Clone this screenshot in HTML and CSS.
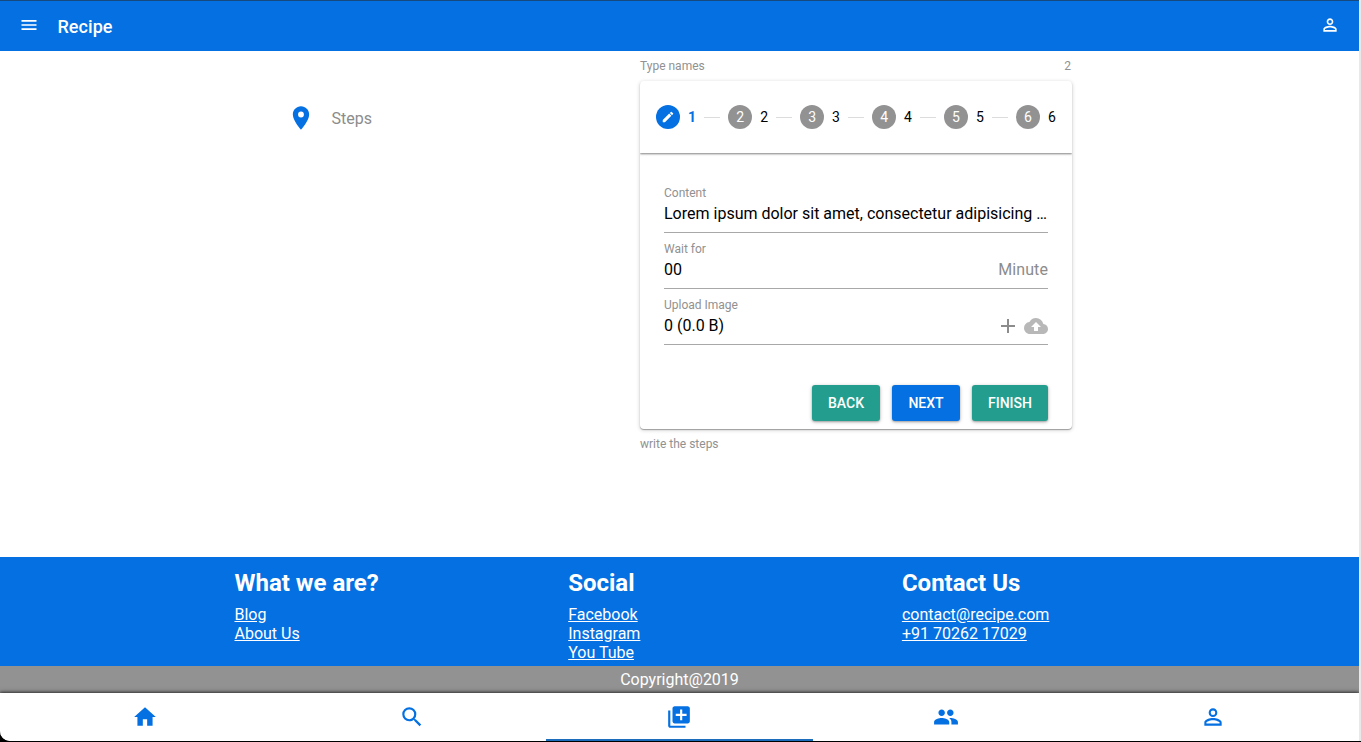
FILE: index.html
```html
<!DOCTYPE html>
<html lang="en">
<head>
<meta charset="utf-8">
<title>Recipe</title>
<link rel="stylesheet" href="styles.css">
</head>
<body>
<div class="app">
  <header class="header">
    <svg class="icon icon-header" viewBox="0 0 24 24"><path d="M3 18h18v-2H3v2zm0-5h18v-2H3v2zm0-7v2h18V6H3z"/></svg>
    <h1 class="title">Recipe</h1>
    <svg class="icon icon-header" viewBox="0 0 24 24"><path d="M12 5.9a2.1 2.1 0 110 4.2 2.1 2.1 0 010-4.2m0 9c2.97 0 6.1 1.46 6.1 2.1v1.1H5.9V17c0-.64 3.13-2.1 6.1-2.1M12 4C9.79 4 8 5.79 8 8s1.79 4 4 4 4-1.79 4-4-1.79-4-4-4zm0 9c-2.67 0-8 1.34-8 4v3h16v-3c0-2.66-5.33-4-8-4z"/></svg>
  </header>

  <main class="main">
    <div class="item">
      <svg class="icon icon-place" viewBox="0 0 24 24"><path d="M12 2C8.13 2 5 5.13 5 9c0 5.25 7 13 7 13s7-7.75 7-13c0-3.87-3.13-7-7-7zm0 9.500a2.500 2.500 0 010-5 2.500 2.500 0 010 5z"/></svg>
      <span class="item-label">Steps</span>
    </div>
    <section class="panel">
      <div class="panel-top"><span>Type names</span><span>2</span></div>
      <div class="card">
        <div class="stepper">
          <div class="step step-active"><span class="dot"><svg class="icon icon-edit" viewBox="0 0 24 24"><path d="M3 17.250V21h3.750L17.810 9.940l-3.750-3.750L3 17.250zM20.710 7.040a1 1 0 000-1.410l-2.340-2.340a1 1 0 00-1.410 0l-1.830 1.830 3.750 3.750 1.830-1.830z"/></svg></span><span>1</span></div>
          <i class="line"></i>
          <div class="step"><span class="dot">2</span><span>2</span></div>
          <i class="line"></i>
          <div class="step"><span class="dot">3</span><span>3</span></div>
          <i class="line"></i>
          <div class="step"><span class="dot">4</span><span>4</span></div>
          <i class="line"></i>
          <div class="step"><span class="dot">5</span><span>5</span></div>
          <i class="line"></i>
          <div class="step"><span class="dot">6</span><span>6</span></div>
        </div>
        <div class="form">
          <div class="field">
            <label class="field-label">Content</label>
            <div class="field-row"><span class="value">Lorem ipsum dolor sit amet, consectetur adipisicing …</span></div>
          </div>
          <div class="field">
            <label class="field-label">Wait for</label>
            <div class="field-row"><span class="value">00</span><span class="suffix">Minute</span></div>
          </div>
          <div class="field">
            <label class="field-label">Upload Image</label>
            <div class="field-row"><span class="value">0 (0.0 B)</span>
              <span class="actions">
                <svg class="icon icon-add" viewBox="0 0 24 24"><path d="M19 13h-6v6h-2v-6H5v-2h6V5h2v6h6v2z"/></svg>
                <svg class="icon icon-cloud" viewBox="0 0 24 24"><path d="M19.350 10.040A7.490 7.490 0 0012 4C9.110 4 6.600 5.640 5.350 8.040A5.994 5.994 0 000 14c0 3.310 2.690 6 6 6h13c2.760 0 5-2.240 5-5 0-2.640-2.050-4.780-4.650-4.960zM14 13v4h-4v-4H7l5-5 5 5h-3z"/></svg>
              </span>
            </div>
          </div>
        </div>
        <div class="buttons">
          <button class="btn">BACK</button>
          <button class="btn btn-primary">NEXT</button>
          <button class="btn">FINISH</button>
        </div>
      </div>
      <div class="hint">write the steps</div>
    </section>
  </main>

  <footer class="footer">
    <div class="col"><h2>What we are?</h2><a href="#">Blog</a><a href="#">About Us</a></div>
    <div class="col"><h2>Social</h2><a href="#">Facebook</a><a href="#">Instagram</a><a href="#">You Tube</a></div>
    <div class="col"><h2>Contact Us</h2><a href="#">contact@recipe.com</a><a href="#">+91 70262 17029</a></div>
  </footer>
  <div class="copyright">Copyright@2019</div>

  <nav class="tabs">
    <a class="tab"><svg class="icon icon-tab" viewBox="0 0 24 24"><path d="M10 20v-6h4v6h5v-8h3L12 3 2 12h3v8z"/></svg></a>
    <a class="tab"><svg class="icon icon-tab" viewBox="0 0 24 24"><path d="M15.500 14h-.790l-.280-.270A6.471 6.471 0 0016 9.500 6.500 6.500 0 109.500 16c1.610 0 3.090-.590 4.230-1.570l.270.280v.790l5 4.990L20.490 19l-4.990-5zm-6 0a4.500 4.500 0 110-9 4.500 4.500 0 010 9z"/></svg></a>
    <a class="tab tab-active"><svg class="icon icon-tab" viewBox="0 0 24 24"><path d="M4 6H2v14c0 1.100.900 2 2 2h14v-2H4V6zm16-4H8c-1.100 0-2 .900-2 2v12c0 1.100.900 2 2 2h12c1.100 0 2-.900 2-2V4c0-1.100-.900-2-2-2zm-1 9h-4v4h-2v-4H9V9h4V5h2v4h4v2z"/></svg></a>
    <a class="tab"><svg class="icon icon-tab" viewBox="0 0 24 24"><path d="M16 11c1.660 0 2.990-1.340 2.990-3S17.660 5 16 5s-3 1.340-3 3 1.340 3 3 3zm-8 0c1.660 0 2.990-1.340 2.990-3S9.660 5 8 5 5 6.340 5 8s1.340 3 3 3zm0 2c-2.330 0-7 1.170-7 3.500V19h14v-2.500c0-2.330-4.670-3.500-7-3.500zm8 0c-.290 0-.620.020-.970.050 1.160.840 1.970 1.970 1.970 3.450V19h6v-2.500c0-2.330-4.670-3.500-7-3.500z"/></svg></a>
    <a class="tab"><svg class="icon icon-tab" viewBox="0 0 24 24"><path d="M12 5.900a2.100 2.100 0 110 4.200 2.100 2.100 0 010-4.200m0 9c2.970 0 6.100 1.460 6.100 2.100v1.100H5.900V17c0-.640 3.130-2.100 6.100-2.100M12 4C9.790 4 8 5.790 8 8s1.790 4 4 4 4-1.790 4-4-1.790-4-4-4zm0 9c-2.670 0-8 1.340-8 4v3h16v-3c0-2.660-5.330-4-8-4z"/></svg></a>
  </nav>
</div>
</body>
</html>
```

FILE: styles.css
```css
* { box-sizing: border-box; }
html { background: #000; }
body {
  margin: 0;
  height: 742px;
  overflow: hidden;
  font-family: Roboto, "Liberation Sans", sans-serif;
  font-size: 16px;
  color: #000;
}
.app {
  height: 741px;
  display: flex;
  flex-direction: column;
  background: #fff;
  border-right: 2px solid #e9e9e9;
  border-bottom-left-radius: 10px;
  overflow: hidden;
}
.icon { display: block; flex: none; width: 24px; height: 24px; fill: currentColor; }

.header {
  flex: none;
  height: 51px;
  display: flex;
  align-items: center;
  padding: 0 19px 0 18.600px;
  border-top: 1px solid #17487e;
  background: #0470e1;
  color: #fff;
}
.icon-header { width: 20px; height: 20px; margin-top: -2px; }
.title {
  flex: 1;
  margin: 2px 0 0 18.900px;
  font-size: 18px;
  line-height: 24px;
  font-weight: 500;
  letter-spacing: 0.05px;
}

.main {
  flex: 1;
  display: flex;
  padding: 8px 287px 0;
}
.item { width: 353px; display: flex; align-items: center; height: 118px; color: #8c8c8c; }
.icon-place { width: 28px; height: 28px; color: #0470e1; }
.item-label { margin-left: 16.500px; padding-top: 1px; }

.panel { width: 432px; }
.panel-top {
  display: flex;
  justify-content: space-between;
  height: 22px;
  padding-right: 1px;
}
.panel-top, .hint, .field-label {
  font-size: 12px;
  line-height: 14px;
  color: #919191;
}
.hint { padding-top: 8px; }
.card {
  height: 348px;
  border-radius: 4px;
  box-shadow: 0 1px 4px rgba(0,0,0,.2), 0 1px 1px rgba(0,0,0,.3);
}
.stepper {
  height: 72px;
  display: flex;
  align-items: center;
  justify-content: space-between;
  padding: 0 16px;
  font-size: 14px;
  box-shadow: 0 1px 2px rgba(0,0,0,.5);
  clip-path: inset(0 0 -4px 0);
}
.step { display: flex; align-items: center; gap: 8px; }
.step-active { color: #0470e1; font-weight: 700; }
.dot {
  width: 24px;
  height: 24px;
  border-radius: 50%;
  display: flex;
  align-items: center;
  justify-content: center;
  background: #929292;
  color: #fff;
}
.step-active .dot { background: #0470e1; }
.icon-edit { width: 14px; height: 14px; }
.line { width: 16px; height: 1px; background: #dcdcdc; }

.form { padding: 24px 24px 0; }
.field { height: 56px; padding-top: 9px; border-bottom: 1px solid #a8a8a8; }
.field-label { display: block; height: 14px; }
.field-row {
  display: flex;
  align-items: center;
  justify-content: space-between;
  height: 24px;
  margin-top: 1px;
  white-space: nowrap;
}
.suffix { color: #8c8c8c; letter-spacing: 0.1px; }
.actions { display: flex; gap: 4px; padding-top: 2px; color: #8c8c8c; }
.icon-cloud { color: #b8b8b8; }

.buttons {
  display: flex;
  justify-content: flex-end;
  gap: 12px;
  padding: 40px 24px 0;
}
.btn {
  min-width: 68px;
  height: 36px;
  padding: 0 15.500px;
  border: 0;
  border-radius: 3px;
  background: #239e8e;
  color: #fff;
  font: 500 14px/24px Roboto, "Liberation Sans", sans-serif;
  box-shadow: 0 1px 4px rgba(0,0,0,.2), 0 1px 2px rgba(0,0,0,.25);
}
.btn:last-child { min-width: 76px; }
.btn-primary { background: #0470e1; }

.footer {
  flex: none;
  height: 109px;
  display: grid;
  grid-template-columns: repeat(3, 333.700px);
  padding: 10px 0 0 234.500px;
  background: #0470e1;
  color: #fff;
}
.col { display: flex; flex-direction: column; align-items: flex-start; }
.col h2 { margin: 0 0 6px; font-size: 24px; line-height: 32px; font-weight: 700; }
.col a { color: #fff; line-height: 19px; }
.copyright {
  flex: none;
  height: 27px;
  line-height: 27px;
  text-align: center;
  color: #fff;
  background: #929292;
}
.tabs {
  flex: none;
  position: relative;
  display: flex;
  height: 48px;
  padding: 0 12px;
  color: #0470e1;
  background: #fff;
  box-shadow: 0 -1px 4px rgba(0,0,0,.5), 0 -1px 2px rgba(0,0,0,.3);
}
.tab { flex: 1; display: flex; align-items: center; justify-content: center; padding-right: 1px; }
.icon-tab { width: 26px; height: 26px; }
.tab-active { border-bottom: 2px solid #1c6dbb; padding-top: 2px; }
```
